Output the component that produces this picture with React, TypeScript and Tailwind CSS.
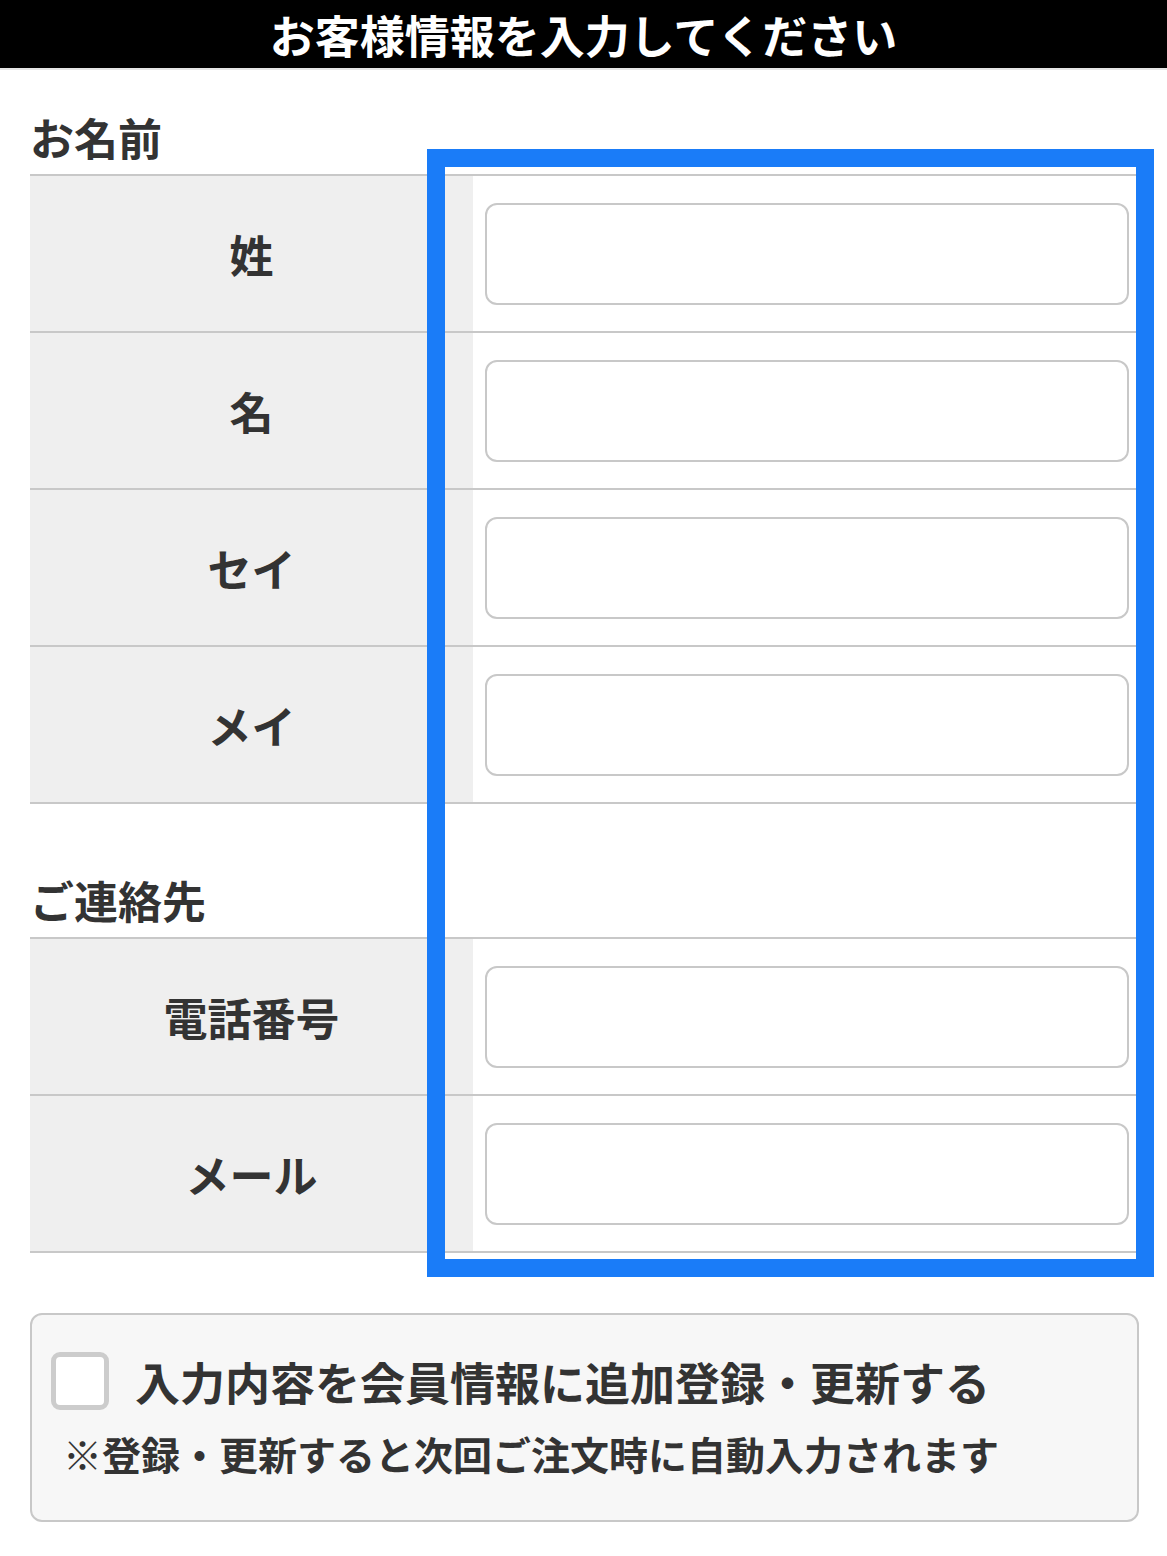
import React from "react";

const rows1 = ["姓", "名", "セイ", "メイ"];
const rows2 = ["電話番号", "メール"];

function Row({ label }: { label: string }) {
  return (
    <div className="flex h-[157px] border-b-2 border-[#c8c8c8]">
      <div className="w-[443px] bg-[#efefef] flex items-center justify-center text-[44px] leading-none font-bold text-[#333333]">
        {label}
      </div>
      <div className="flex-1 bg-white flex items-center pl-[12px] pr-[8px]">
        <div className="w-full h-[102px] rounded-[12px] border-2 border-[#c8c8c8] bg-white" />
      </div>
    </div>
  );
}

export default function App() {
  return (
    <div
      className="relative w-[1167px] h-[1556px] bg-white overflow-hidden"
      style={{ fontFamily: '"Noto Sans CJK JP", "Noto Sans", sans-serif' }}
    >
      <div className="h-[68px] bg-black flex items-center justify-center text-white text-[45px] font-bold leading-none">
        お客様情報を入力してください
      </div>
      <div className="h-[2px] bg-[#e6e6e6]" />

      <div className="px-[30px]">
        <h2 className="mt-[45px] mb-[15px] text-[44px] leading-[44px] font-bold text-[#333333]">お名前</h2>
        <div className="border-t-2 border-[#c8c8c8]">
          {rows1.map((r) => (
            <Row key={r} label={r} />
          ))}
        </div>

        <h2 className="mt-[74px] mb-[15px] text-[44px] leading-[44px] font-bold text-[#333333]">ご連絡先</h2>
        <div className="border-t-2 border-[#c8c8c8]">
          {rows2.map((r) => (
            <Row key={r} label={r} />
          ))}
        </div>

        <div className="mt-[60px] mr-[-2px] h-[209px] rounded-[12px] border-2 border-[#c8c8c8] bg-[#f7f7f7] pt-[37px] px-[19px]">
          <div className="flex items-center h-[58px]">
            <div className="w-[58px] h-[58px] rounded-[9px] border-[5px] border-[#cccccc] bg-white shrink-0" />
            <span className="ml-[26px] text-[45px] leading-none font-bold text-[#333333]">
              入力内容を会員情報に追加登録・更新する
            </span>
          </div>
          <div className="mt-[24px] ml-[12px] text-[39px] leading-none font-bold text-[#333333]">
            ※登録・更新すると次回ご注文時に自動入力されます
          </div>
        </div>
      </div>

      <div className="absolute left-[427px] top-[149px] w-[727px] h-[1128px] border-[18px] border-[#1a7cf8] pointer-events-none" />
    </div>
  );
}
